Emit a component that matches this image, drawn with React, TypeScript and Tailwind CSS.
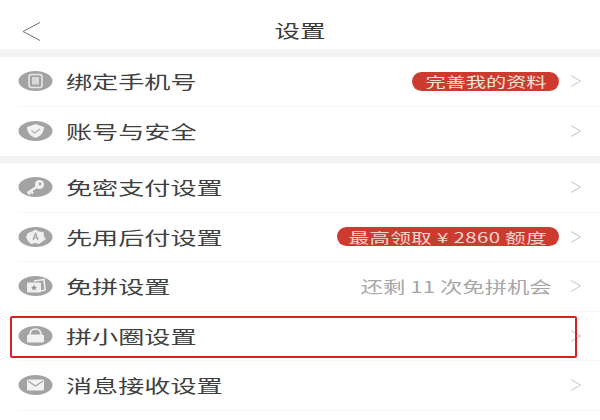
import React from "react";

const font = { fontFamily: '"Noto Sans CJK SC", "Liberation Sans", sans-serif' };

function Chevron({ cls = "text-[#c4c4c4]" }: { cls?: string }) {
  return (
    <svg width="12" height="14" viewBox="0 0 12 14" fill="none" className={cls}>
      <path d="M1 1.5 L10.5 7 L1 12.5" stroke="currentColor" strokeWidth="1" />
    </svg>
  );
}

function Blob({ children }: { children: React.ReactNode }) {
  return (
    <svg width="35" height="20" viewBox="0 0 35 20" className="shrink-0">
      <ellipse cx="17.5" cy="10" rx="17" ry="10" fill="#a3a3a3" />
      {children}
    </svg>
  );
}

const icons: Record<string, React.ReactNode> = {
  phone: (
    <>
      <rect x="11" y="3.5" width="13" height="13" rx="2.5" fill="none" stroke="#e6e6e6" strokeWidth="1.6" />
      <rect x="14" y="6" width="7" height="7.5" fill="#d8d8d8" />
    </>
  ),
  shield: (
    <>
      <path d="M17.5 3 L26 6 C26 12 22 15.5 17.5 17 C13 15.5 9 12 9 6 Z" fill="#f2f2f2" />
      <path d="M13.5 9.5 L16.5 12 L22 8" fill="none" stroke="#b5b5b5" strokeWidth="1.4" />
    </>
  ),
  key: (
    <>
      <circle cx="21.5" cy="7.5" r="4.5" fill="#f2f2f2" />
      <circle cx="22" cy="7" r="1.4" fill="#a3a3a3" />
      <path d="M18.5 10 L9.5 16 M13 14 L15 16.5 M10.5 15.5 L12 17.5" stroke="#f2f2f2" strokeWidth="2.2" fill="none" />
    </>
  ),
  badge: (
    <>
      <path d="M17.5 2.5 L21 4.5 L25.5 5 L26 9.5 L28 12 L24.5 14.5 L21 17 L17.5 16 L13 17 L10 14 L8 10 L10 6 L14 4.5 Z" fill="#efefef" />
      <path d="M15 13 L17.5 6.5 L20 13 M15.8 11 H19.2" fill="none" stroke="#a3a3a3" strokeWidth="1.2" />
    </>
  ),
  cards: (
    <>
      <path d="M16 5 L26 3.5 L27 14 L23 15" fill="none" stroke="#efefef" strokeWidth="1.6" />
      <rect x="9" y="6.5" width="14" height="10" rx="1" fill="#efefef" />
      <path d="M16 8.8 L16.9 10.8 L19 11 L17.4 12.3 L17.9 14.3 L16 13.2 L14.1 14.3 L14.6 12.3 L13 11 L15.1 10.8 Z" fill="#8f8f8f" />
    </>
  ),
  lock: (
    <>
      <path d="M12 9 C12 4.5 14.5 3 17.5 3 C20.5 3 23 4.5 23 9" fill="none" stroke="#f2f2f2" strokeWidth="1.6" />
      <rect x="9" y="8.5" width="17" height="8" rx="1.5" fill="#f2f2f2" />
    </>
  ),
  mail: (
    <>
      <rect x="9" y="4.5" width="17" height="11" rx="1.5" fill="#f4f4f4" />
      <path d="M10 6 L17.5 11 L25 6" fill="none" stroke="#a3a3a3" strokeWidth="1.1" />
    </>
  ),
};

function Row({
  icon,
  label,
  right,
  divider = true,
}: {
  icon: string;
  label: string;
  right?: React.ReactNode;
  divider?: boolean;
}) {
  return (
    <div className="h-[49.5px] pl-[18px] flex flex-col">
      <div className="flex-1 flex items-center pr-[18px]">
        <Blob>{icons[icon]}</Blob>
        <span className="ml-[13px] text-[18px] leading-none text-[#404040] whitespace-nowrap origin-left scale-x-[1.45] inline-block">
          {label}
        </span>
        <div className="ml-auto flex items-center">
          {right}
          <span className="ml-[11px] flex">
            <Chevron />
          </span>
        </div>
      </div>
      {divider && <div className="h-px bg-[#f6f6f6]" />}
    </div>
  );
}

function Pill({ text, width, wide = false }: { text: string; width: string; wide?: boolean }) {
  return (
    <div className={`${width} h-[19px] rounded-full bg-[#cd3b2f] flex items-center justify-center`}>
      <span
        className={
          wide
            ? "text-[14px] leading-none tracking-[0.25px] text-[#f0d6d1] whitespace-nowrap scale-x-[1.46] inline-block"
            : "text-[14px] leading-none text-[#f6e0dc] whitespace-nowrap scale-x-[1.44] inline-block"
        }
      >
        {text}
      </span>
    </div>
  );
}

export default function App() {
  return (
    <div className="relative w-[600px] h-[420px] bg-white overflow-hidden" style={font}>
      <header className="h-[49px] relative flex items-center justify-center">
        <svg width="20" height="20" viewBox="0 0 20 20" fill="none" className="absolute left-[21px] top-[21px]">
          <path d="M19 1.5 L2 10.5 L19 19.5" stroke="#6e6e6e" strokeWidth="1" />
        </svg>
        <span className="text-[18px] leading-none text-[#3a3a3a] scale-x-[1.42] inline-block mt-[11px]">设置</span>
      </header>
      <div className="h-[8px] bg-[#f3f3f3]" />
      <Row icon="phone" label="绑定手机号" right={<Pill text="完善我的资料" width="w-[147px]" />} />
      <Row icon="shield" label="账号与安全" divider={false} />
      <div className="h-[7px] bg-[#f3f3f3]" />
      <Row icon="key" label="免密支付设置" />
      <Row icon="badge" label="先用后付设置" right={<Pill text="最高领取 ¥ 2860 额度" width="w-[222px]" wide />} />
      <Row
        icon="cards"
        label="免拼设置"
        right={
          <span className="text-[15.5px] leading-none text-[#a6a6a6] whitespace-nowrap origin-right scale-x-[1.44] inline-block mr-[7px]">
            还剩 11 次免拼机会
          </span>
        }
      />
      <Row icon="lock" label="拼小圈设置" />
      <Row icon="mail" label="消息接收设置" />
      <div className="absolute left-[10px] top-[316px] w-[567px] h-[42px] border-2 border-[#dc2028] rounded-[2px]" />
    </div>
  );
}
